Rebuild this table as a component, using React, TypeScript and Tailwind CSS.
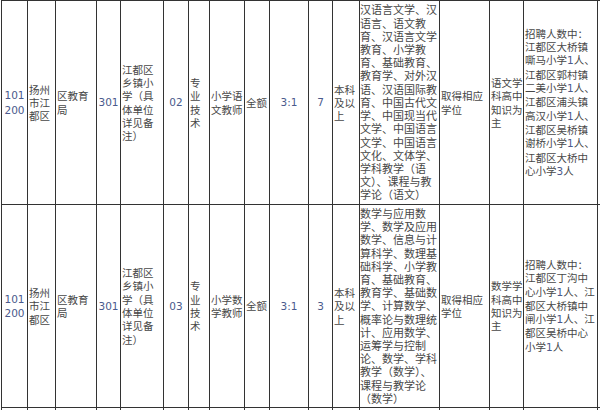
import React from "react";

type Post = {
  code: string[];
  area: string[];
  dept: string[];
  unit: string;
  unitName: string[];
  no: string;
  kind: string[];
  post: string[];
  fund: string[];
  ratio: string;
  count: string;
  edu: string[];
  major: string[];
  degree: string[];
  exam: string[];
  note: string[];
};

const posts: Post[] = [
  {
    code: ["101", "200"],
    area: ["扬州", "市江", "都区"],
    dept: ["区教育", "局"],
    unit: "301",
    unitName: ["江都区", "乡镇小", "学（具", "体单位", "详见备", "注）"],
    no: "02",
    kind: ["专", "业", "技", "术"],
    post: ["小学语", "文教师"],
    fund: ["全额"],
    ratio: "3:1",
    count: "7",
    edu: ["本科", "及以", "上"],
    major: [
      "汉语言文学、汉",
      "语言、语文教",
      "育、汉语言文学",
      "教育、小学教",
      "育、基础教育、",
      "教育学、对外汉",
      "语、汉语国际教",
      "育、中国古代文",
      "学、中国现当代",
      "文学、中国语言",
      "文学、中国语言",
      "文化、文体学、",
      "学科教学（语",
      "文）、课程与教",
      "学论（语文）",
    ],
    degree: ["取得相应", "学位"],
    exam: ["语文学", "科高中", "知识为", "主"],
    note: [
      "招聘人数中：",
      "江都区大桥镇",
      "嘶马小学1人、",
      "江都区郭村镇",
      "二美小学1人、",
      "江都区浦头镇",
      "高汉小学1人、",
      "江都区吴桥镇",
      "谢桥小学1人、",
      "江都区大桥中",
      "心小学3人",
    ],
  },
  {
    code: ["101", "200"],
    area: ["扬州", "市江", "都区"],
    dept: ["区教育", "局"],
    unit: "301",
    unitName: ["江都区", "乡镇小", "学（具", "体单位", "详见备", "注）"],
    no: "03",
    kind: ["专", "业", "技", "术"],
    post: ["小学数", "学教师"],
    fund: ["全额"],
    ratio: "3:1",
    count: "3",
    edu: ["本科", "及以", "上"],
    major: [
      "数学与应用数",
      "学、数学及应用",
      "数学、信息与计",
      "算科学、数理基",
      "础科学、小学教",
      "育、基础教育、",
      "教育学、基础数",
      "学、计算数学、",
      "概率论与数理统",
      "计、应用数学、",
      "运筹学与控制",
      "论、数学、学科",
      "教学（数学）、",
      "课程与教学论",
      "（数学）",
    ],
    degree: ["取得相应", "学位"],
    exam: ["数学学", "科高中", "知识为", "主"],
    note: [
      "招聘人数中：",
      "江都区丁沟中",
      "心小学1人、江",
      "都区大桥镇中",
      "闸小学1人、江",
      "都区吴桥中心",
      "小学1人",
    ],
  },
];

const widths = [
  "w-[27px] border-l",
  "w-[28px]",
  "w-[41px]",
  "w-[24px]",
  "w-[43px]",
  "w-[25px]",
  "w-[21px]",
  "w-[35px]",
  "w-[25px]",
  "w-[39px]",
  "w-[24px]",
  "w-[27px]",
  "w-[80px]",
  "w-[50px]",
  "w-[34px]",
  "w-[74px]",
];

function Num({ value }: { value: string }) {
  return (
    <span className="font-['DejaVu_Sans',sans-serif] text-[10.5px] text-[#4a5a8c]">
      {value}
    </span>
  );
}

function Line({ text }: { text: string }) {
  const parts = text.split(/(\d+)/);
  return (
    <div className="whitespace-nowrap">
      {parts.map((p, i) =>
        /^\d+$/.test(p) ? <Num key={i} value={p} /> : <span key={i}>{p}</span>
      )}
    </div>
  );
}

function Cell({
  col,
  lines,
  numeric,
  big,
}: {
  col: number;
  lines: string[];
  numeric?: boolean;
  big?: boolean;
}) {
  return (
    <div
      className={`${widths[col]} flex shrink-0 items-center border-r border-[#333] ${
        numeric ? "justify-center" : big ? "pl-0" : "pl-px"
      }`}
    >
      <div className={big ? "text-[11px] leading-[13.2px]" : "leading-[13.3px]"}>
        {numeric
          ? lines.map((l, i) => (
              <div key={i} className="text-center">
                <Num value={l} />
              </div>
            ))
          : lines.map((l, i) => <Line key={i} text={l} />)}
      </div>
    </div>
  );
}

function PostRow({ post, first }: { post: Post; first?: boolean }) {
  return (
    <div
      className={`flex border-b border-[#333] ${
        first ? "h-[205px] border-t" : "h-[203px]"
      }`}
    >
      <Cell col={0} lines={post.code} numeric />
      <Cell col={1} lines={post.area} />
      <Cell col={2} lines={post.dept} />
      <Cell col={3} lines={[post.unit]} numeric />
      <Cell col={4} lines={post.unitName} />
      <Cell col={5} lines={[post.no]} numeric />
      <Cell col={6} lines={post.kind} />
      <Cell col={7} lines={post.post} />
      <Cell col={8} lines={post.fund} />
      <Cell col={9} lines={[post.ratio]} numeric />
      <Cell col={10} lines={[post.count]} numeric />
      <Cell col={11} lines={post.edu} />
      <Cell col={12} lines={post.major} big />
      <Cell col={13} lines={post.degree} />
      <Cell col={14} lines={post.exam} />
      <Cell col={15} lines={post.note} />
    </div>
  );
}

export default function App() {
  return (
    <div className="h-[410px] w-[600px] overflow-hidden bg-white pl-px font-['Noto_Sans_CJK_SC','Noto_Sans',sans-serif] text-[10.5px] text-[#474747]">
      {posts.map((p, i) => (
        <PostRow key={i} post={p} first={i === 0} />
      ))}
      <div className="flex h-[10px]">
        {widths.map((w, i) => (
          <div key={i} className={`${w} shrink-0 border-r border-[#333]`} />
        ))}
      </div>
    </div>
  );
}
